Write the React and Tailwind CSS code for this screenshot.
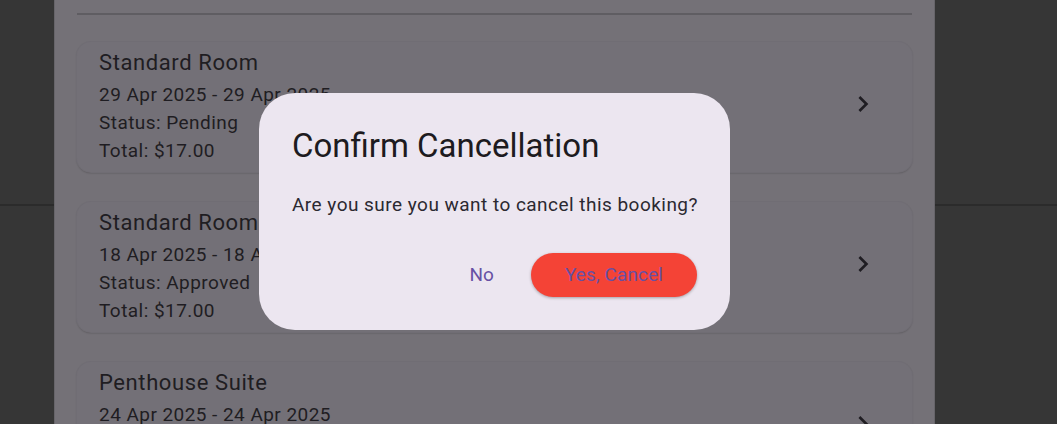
const bookings = [
  { room: 'Standard Room', dates: '29 Apr 2025 - 29 Apr 2025', status: 'Pending', total: '$17.00' },
  { room: 'Standard Room', dates: '18 Apr 2025 - 18 Apr 2025', status: 'Approved', total: '$17.00' },
  { room: 'Penthouse Suite', dates: '24 Apr 2025 - 24 Apr 2025', status: 'Approved', total: '$17.00' },
];

function SideColumn({ className }) {
  return (
    <div className={`flex flex-col bg-[#363636] ${className}`}>
      <div className="h-[206px] border-b-2 border-[#2b2b2b]" />
    </div>
  );
}

function BookingCard({ booking }) {
  return (
    <div className="flex h-[130px] shrink-0 items-center justify-between rounded-[14px] bg-[#737077] pl-[22px] pr-[33px] shadow-[0_1px_2px_rgba(0,0,0,0.3)] ring-1 ring-[#706d74]">
      <div className="self-start pt-[6px] text-[#1f1d22]">
        <div className="text-[22px] leading-[30px] tracking-[0.6px]">{booking.room}</div>
        <div className="mt-[3px] text-[19px] leading-[28px] tracking-[0.45px]">{booking.dates}</div>
        <div className="text-[19px] leading-[28px] tracking-[0.45px]">Status: {booking.status}</div>
        <div className="text-[19px] leading-[28px] tracking-[0.45px]">Total: {booking.total}</div>
      </div>
      <svg viewBox="0 0 24 24" className="mb-[6px] h-[32px] w-[32px] fill-[#1f1d22]">
        <path d="M10 6L8.59 7.41 13.17 12l-4.58 4.59L10 18l6-6z" />
      </svg>
    </div>
  );
}

export default function App() {
  return (
    <div
      className="flex h-[424px] w-full overflow-hidden"
      style={{ fontFamily: 'Roboto, "Noto Sans", sans-serif' }}
    >
      <SideColumn className="w-[54px]" />

      <div className="relative w-[881px] shrink-0 border-x border-[#67656a] bg-[#747177]">
        <div className="flex flex-col px-[22px]">
          <div className="mt-[13px] h-[2px] bg-[#5f5d62]" />
          <div className="mt-[27px] flex flex-col gap-[30px]">
            {bookings.map((b, i) => (
              <BookingCard key={i} booking={b} />
            ))}
          </div>
        </div>

        <div className="absolute left-[204px] top-[93px] w-[471px] rounded-[36px] bg-[#ece6f0] px-[33px] pb-[33px] pt-[32px]">
          <h2 className="text-[33px] leading-[42px] text-[#1d1b20]">Confirm Cancellation</h2>
          <p className="mt-[25px] whitespace-nowrap text-[19px] leading-[26px] tracking-[0.47px] text-[#2b2930]">
            Are you sure you want to cancel this booking?
          </p>
          <div className="mt-[35px] flex items-center justify-end gap-[13px]">
            <button className="h-[44px] px-[24px] text-[19px] tracking-[0.1px] text-[#6750a4]">No</button>
            <button className="h-[44px] w-[166px] rounded-full bg-[#f44336] text-[19px] tracking-[0.1px] text-[#6750a4] shadow-[0_1px_3px_rgba(0,0,0,0.3)]">
              Yes, Cancel
            </button>
          </div>
        </div>
      </div>

      <SideColumn className="flex-1" />
    </div>
  );
}
